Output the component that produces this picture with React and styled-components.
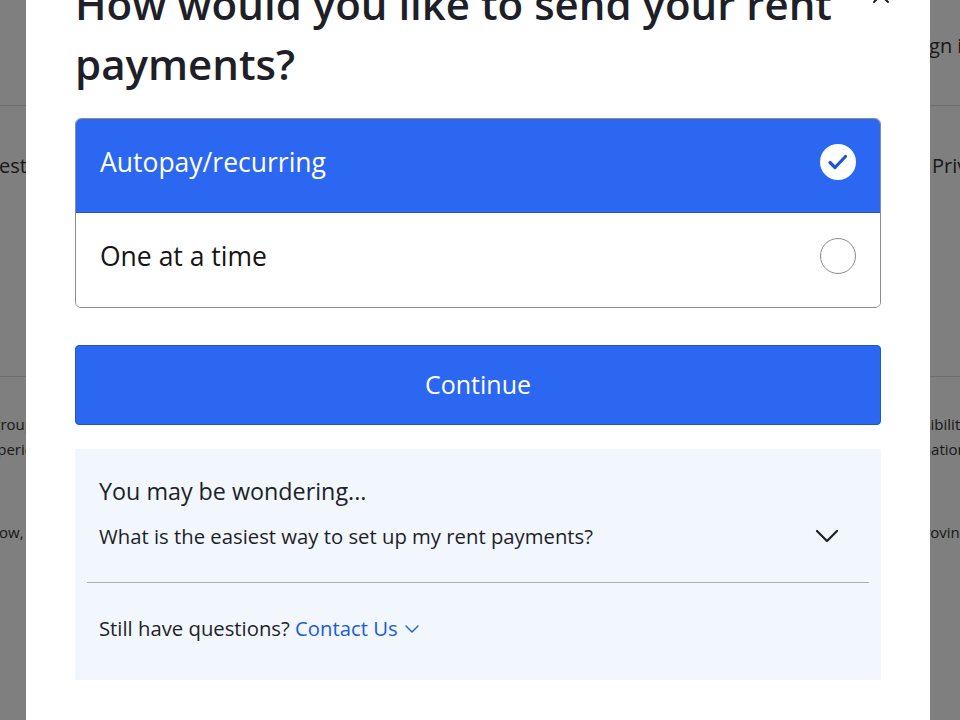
import React from "react";
import styled, { createGlobalStyle } from "styled-components";

const BLUE = "#2b67f0";
const BLUE_DARK = "#1f55d2";
const INK = "#1e1f29";

const GlobalStyle = createGlobalStyle`
  * { box-sizing: border-box; }
  html, body {
    margin: 0;
    padding: 0;
    overflow: hidden;
    background: #fff;
    font-family: "Open Sans", "Noto Sans", "Liberation Sans", sans-serif;
  }
`;

const options = [
  { id: "auto", label: "Autopay/recurring" },
  { id: "single", label: "One at a time" },
];

const App = () => {
  const [selected, setSelected] = React.useState("auto");
  const [open, setOpen] = React.useState(false);

  return (
    <>
      <GlobalStyle />
      <Page>
        <Header>
          <EdgeRow>
            <Edge />
            <Edge $side="right" $reach={47}>Sign in</Edge>
          </EdgeRow>
        </Header>
        <Tabs>
          <EdgeRow>
            <Edge>Interest</Edge>
            <Edge $side="right" $reach={28}>Privacy</Edge>
          </EdgeRow>
        </Tabs>
        <Footer>
          <EdgeRow $small>
            <Edge $small $reach={34}>Our group</Edge>
            <Edge $small $side="right" $reach={76}>Accessibility</Edge>
          </EdgeRow>
          <EdgeRow $small>
            <Edge $small $reach={58}>experience</Edge>
            <Edge $small $side="right" $reach={76}>information,</Edge>
          </EdgeRow>
          <Spacer />
          <EdgeRow $small>
            <Edge $small $reach={45}>below, let</Edge>
            <Edge $small $side="right" $reach={45}>provinces</Edge>
          </EdgeRow>
        </Footer>
      </Page>

      <Overlay>
        <Modal role="dialog">
          <CloseButton aria-label="Close">
            <svg width="20" height="20" viewBox="0 0 20 20">
              <path
                d="M3 3 L17 17 M17 3 L3 17"
                stroke={INK}
                strokeWidth="2"
                strokeLinecap="round"
              />
            </svg>
          </CloseButton>

          <Title>How would you like to send your rent payments?</Title>

          <OptionGroup>
            {options.map((opt) => (
              <Option
                key={opt.id}
                $active={selected === opt.id}
                onClick={() => setSelected(opt.id)}
              >
                <span>{opt.label}</span>
                {selected === opt.id ? (
                  <svg width="36" height="36" viewBox="0 0 36 36">
                    <circle cx="18" cy="18" r="18" fill="#fff" />
                    <path
                      d="M10 18.5 L15 23.5 L25.5 12.5"
                      fill="none"
                      stroke={BLUE_DARK}
                      strokeWidth="3.2"
                      strokeLinecap="round"
                      strokeLinejoin="round"
                    />
                  </svg>
                ) : (
                  <Radio />
                )}
              </Option>
            ))}
          </OptionGroup>

          <ContinueButton>Continue</ContinueButton>

          <HelpBox>
            <HelpInner>
              <HelpTitle>You may be wondering...</HelpTitle>
              <Question onClick={() => setOpen(!open)}>
                <span>What is the easiest way to set up my rent payments?</span>
                <svg width="24" height="14" viewBox="0 0 24 14">
                  <path
                    d="M2 2 L12 12 L22 2"
                    fill="none"
                    stroke={INK}
                    strokeWidth="2.2"
                    strokeLinecap="round"
                    strokeLinejoin="round"
                  />
                </svg>
              </Question>
            </HelpInner>
            <Divider />
            <HelpInner>
              <Still>
                Still have questions?{" "}
                <ContactLink>
                  Contact Us
                  <svg width="16" height="10" viewBox="0 0 16 10">
                    <path
                      d="M2 2 L8 8 L14 2"
                      fill="none"
                      stroke="#1d5bd8"
                      strokeWidth="1.4"
                      strokeLinecap="round"
                      strokeLinejoin="round"
                    />
                  </svg>
                </ContactLink>
              </Still>
            </HelpInner>
          </HelpBox>
        </Modal>
      </Overlay>
    </>
  );
};

export default App;

/* page behind the dialog */

const Page = styled.div`
  width: 100%;
  height: 720px;
  color: #333;
`;

const Header = styled.header`
  height: 106px;
  border-bottom: 1px solid #dcdcdc;
  padding-top: 30px;
`;

const Tabs = styled.nav`
  height: 271px;
  border-bottom: 1px solid #dcdcdc;
  padding-top: 44px;
`;

const Footer = styled.footer`
  padding-top: 34px;
`;

const Spacer = styled.div`
  height: 58px;
`;

const EdgeRow = styled.div`
  display: flex;
  justify-content: space-between;
  height: ${(p) => (p.$small ? "25px" : "30px")};
  align-items: center;
`;

/* edge cells keep a fixed width; left ones spill their text leftwards */
const Edge = styled.span`
  display: flex;
  flex: 0 0 auto;
  min-width: 0;
  justify-content: ${(p) => (p.$side === "right" ? "flex-start" : "flex-end")};
  width: ${(p) => `${p.$reach || 27}px`};
  white-space: nowrap;
  font-size: ${(p) => (p.$small ? "15px" : "20px")};
`;

/* dialog */

const Overlay = styled.div`
  position: fixed;
  inset: 0;
  background: rgba(0, 0, 0, 0.5);
  display: flex;
  align-items: flex-start;
  padding-left: 26px;
`;

const Modal = styled.div`
  position: relative;
  width: 904px;
  margin-top: -60px;
  min-height: 820px;
  background: #fff;
  padding: 34px 49px 40px;
  display: flex;
  flex-direction: column;
`;

const CloseButton = styled.button`
  position: absolute;
  top: 45px;
  right: 39px;
  width: 20px;
  height: 20px;
  padding: 0;
  border: none;
  background: none;
  display: flex;
`;

const Title = styled.h2`
  margin: 0;
  padding-right: 20px;
  font-size: 42px;
  line-height: 60px;
  font-weight: 600;
  color: ${INK};
`;

const OptionGroup = styled.div`
  margin-top: 24px;
  border: 1px solid #8c8c8c;
  border-radius: 6px;
  overflow: hidden;
`;

const Option = styled.div`
  height: 94px;
  display: flex;
  align-items: center;
  justify-content: space-between;
  padding: 0 24px 8px;
  font-size: 26.5px;
  font-weight: 500;
  cursor: pointer;
  background: ${(p) => (p.$active ? BLUE : "#fff")};
  color: ${(p) => (p.$active ? "#fff" : "#151515")};
  border-bottom: 1px solid ${(p) => (p.$active ? BLUE_DARK : "transparent")};

  &:last-child {
    border-bottom: none;
  }
`;

const Radio = styled.span`
  width: 36px;
  height: 36px;
  border-radius: 50%;
  border: 1.5px solid #8a8a8a;
  background: #fff;
`;

const ContinueButton = styled.button`
  margin-top: 37px;
  height: 80px;
  width: 100%;
  padding: 0 0 2px;
  border: 1px solid ${BLUE_DARK};
  border-radius: 4px;
  background: ${BLUE};
  color: #fff;
  font-family: inherit;
  font-size: 25px;
  font-weight: 500;
`;

const HelpBox = styled.section`
  margin-top: 24px;
  height: 231px;
  background: #f1f7fc;
  padding: 27px 12px 0;
`;

const HelpInner = styled.div`
  padding: 0 12px;
`;

const HelpTitle = styled.h3`
  margin: 0;
  font-size: 23.3px;
  line-height: 30px;
  font-weight: 500;
  color: ${INK};
`;

const Question = styled.div`
  margin-top: 16px;
  display: flex;
  align-items: center;
  justify-content: space-between;
  padding-right: 18px;
  font-size: 20.3px;
  line-height: 28px;
  color: ${INK};
  cursor: pointer;
`;

const Divider = styled.hr`
  margin: 32px 0 0;
  border: none;
  border-top: 1px solid #acadb0;
`;

const Still = styled.p`
  margin: 31px 0 0;
  font-size: 20.3px;
  line-height: 28px;
  color: ${INK};
`;

const ContactLink = styled.a`
  color: #1d5bd8;
  display: inline-flex;
  align-items: center;
  gap: 6px;

  svg {
    margin-top: 2px;
  }
`;
